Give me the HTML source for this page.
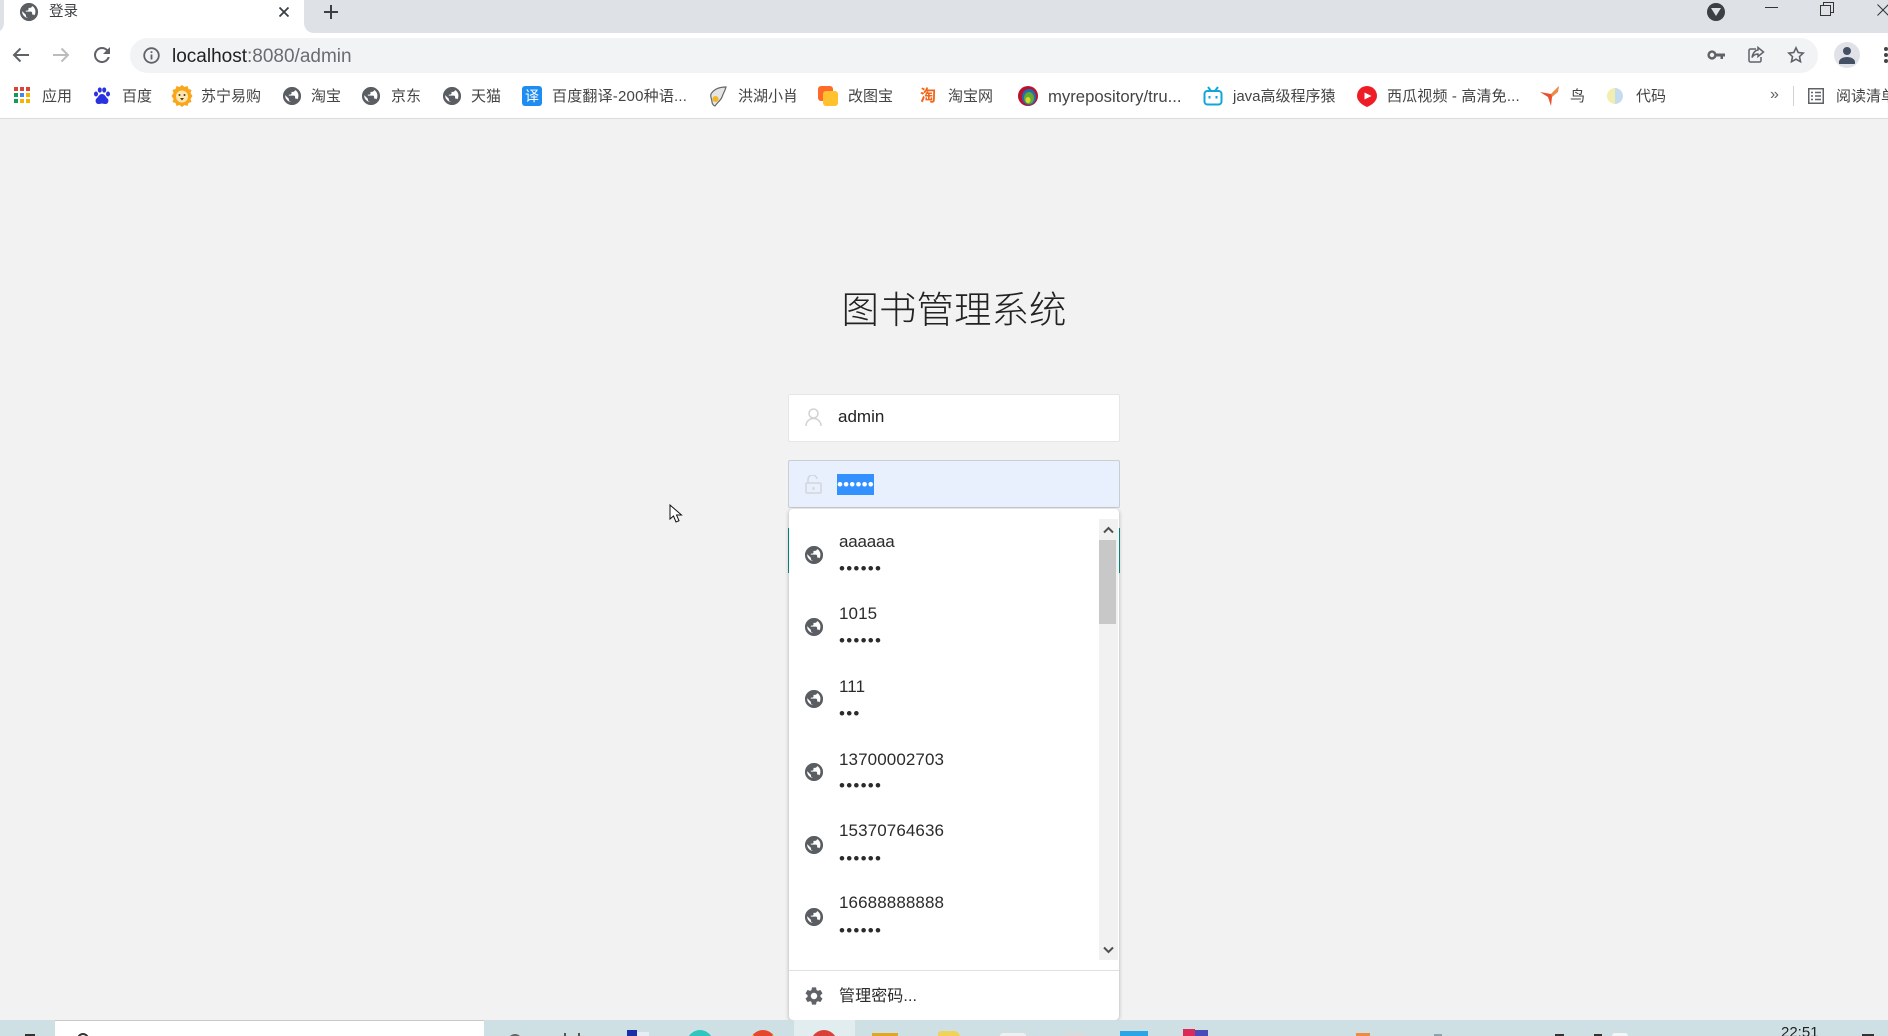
<!DOCTYPE html>
<html lang="zh"><head><meta charset="utf-8"><title>登录</title>
<style>
html,body{margin:0;padding:0;width:1888px;height:1036px;overflow:hidden;background:#f2f2f2;font-family:"Liberation Sans","Noto Sans CJK SC",sans-serif}
#w{position:absolute;left:0;top:0;width:1888px;height:1036px;overflow:hidden;filter:blur(.3px)}
.a{position:absolute}
.t{position:absolute;white-space:nowrap;font-size:15px;line-height:20px;color:#444}
svg{position:absolute;display:block}
.n{position:absolute;left:839px;font-size:17px;line-height:20px;color:#2b2b2b;white-space:nowrap;letter-spacing:.1px}
.d{position:absolute;left:839px;font-size:17px;line-height:20px;color:#2b2b2b;letter-spacing:1.25px;white-space:nowrap}
</style></head>
<body>
<svg width="0" height="0" style="position:absolute"><defs>
<symbol id="g" viewBox="2 2 20 20"><path fill="#5a5e63" stroke="#5a5e63" stroke-width=".9" d="M12 2.400C6.700 2.400 2.400 6.700 2.400 12s4.300 9.600 9.600 9.600 9.600-4.300 9.600-9.600S17.300 2.400 12 2.400zm-1 16.800c-3.950-.49-7-3.850-7-7.200 0-.62.08-1.210.21-1.790L9 15v1c0 1.100.9 2 2 2v1.200zm6.900-2.540c-.26-.81-1-1.390-1.900-1.390h-1v-2.300c0-.55-.45-1-1-1H8v-2h2c.55 0 1-.45 1-1V7h2c1.100 0 2-.9 2-2v-.41c2.930 1.190 4.600 4.060 4.600 7.410 0 1.700-.4 3.240-1.700 4.660z"/></symbol>
</defs></svg>
<div id="w">

<!-- tab strip -->
<div class="a" style="left:0;top:0;width:1888px;height:33px;background:#dee1e6"></div>
<div class="a" style="left:4px;top:0;width:300px;height:33px;background:#fff"></div>
<div class="a" style="left:0;top:22px;width:4px;height:11px;background:#fff"></div>
<div class="a" style="left:-8px;top:13px;width:12px;height:20px;background:#dee1e6;border-radius:0 0 10px 0"></div>
<div class="a" style="left:304px;top:23px;width:10px;height:10px;background:#fff"></div>
<div class="a" style="left:304px;top:0;width:14px;height:33px;background:#dee1e6;border-radius:0 0 0 10px"></div>
<svg style="left:20px;top:3px" width="18" height="18"><use href="#g"/></svg>
<div class="t" style="left:49px;top:2px;font-size:14.500px;color:#3c4043">登录</div>
<svg style="left:278px;top:6px" width="12" height="12" viewBox="0 0 12 12"><path d="M1.500 1.500l9 9M10.500 1.500l-9 9" stroke="#3c4043" stroke-width="1.800"/></svg>
<svg style="left:323px;top:4px" width="16" height="16" viewBox="0 0 16 16"><path d="M8 1v14M1 8h14" stroke="#3c4043" stroke-width="2"/></svg>
<div class="a" style="left:1707px;top:3px;width:18px;height:18px;border-radius:50%;background:#3c4043"></div>
<svg style="left:1710px;top:8px" width="12" height="9" viewBox="0 0 12 9"><path d="M1 0h10L6 8z" fill="#dee1e6"/></svg>
<div class="a" style="left:1765px;top:7px;width:13px;height:1px;background:#333"></div>
<svg style="left:1820px;top:2px" width="14" height="14" viewBox="0 0 14 14" fill="none" stroke="#333" stroke-width="1"><rect x=".5" y="3.500" width="10" height="10"/><path d="M3.500 3.500V.5h10v10h-3"/></svg>
<svg style="left:1877px;top:4px" width="12" height="12" viewBox="0 0 12 12"><path d="M.5.5l11 11M11.500 .5l-11 11" stroke="#333" stroke-width="1"/></svg>

<!-- toolbar -->
<div class="a" style="left:0;top:33px;width:1888px;height:85px;background:#fff;border-bottom:1px solid #dadce0"></div>
<svg style="left:12px;top:47px" width="18" height="16" viewBox="0 0 18 16" fill="none" stroke="#5f6368" stroke-width="2"><path d="M17 8H2M8.500 1.500L2 8l6.500 6.500"/></svg>
<svg style="left:52px;top:47px" width="18" height="16" viewBox="0 0 18 16" fill="none" stroke="#babcbe" stroke-width="2"><path d="M1 8h15M9.500 1.500L16 8l-6.500 6.500"/></svg>
<svg style="left:94px;top:47px" width="16" height="16" viewBox="4 4 16 16"><path fill="#5f6368" d="M17.650 6.350A7.960 7.960 0 0 0 12 4a8 8 0 1 0 7.730 10h-2.080A6 6 0 1 1 12 6c1.660 0 3.140.69 4.220 1.780L13 11h7V4l-2.350 2.350z"/></svg>
<div class="a" style="left:130px;top:38px;width:1688px;height:35px;border-radius:18px;background:#f1f3f4"></div>
<svg style="left:143px;top:47px" width="17" height="17" viewBox="0 0 17 17" fill="none"><circle cx="8.500" cy="8.500" r="7.300" stroke="#5f6368" stroke-width="1.800"/><path d="M8.500 7.500v5M8.500 4.200v1.800" stroke="#5f6368" stroke-width="1.800"/></svg>
<div class="t" style="left:172px;top:45px;font-size:19px;line-height:24px;color:#202124">localhost<span style="color:#6a6d70">:8080/admin</span></div>
<svg style="left:1707px;top:49px" width="18" height="12" viewBox="0 0 18 12"><circle cx="5" cy="6" r="3.400" fill="none" stroke="#5f6368" stroke-width="2.400"/><path d="M8 4.500h10v3h-2v2.500h-2.500V7.500H8z" fill="#5f6368"/></svg>
<svg style="left:1747px;top:46px" width="18" height="18" viewBox="0 0 18 18" fill="none" stroke="#5f6368" stroke-width="1.500"><path d="M9 3H3.500A1.500 1.500 0 0 0 2 4.500v10A1.500 1.500 0 0 0 3.500 16h9a1.500 1.500 0 0 0 1.500-1.500V11"/><path d="M11 1.500L16.500 6 11 10.500V8c-3 0-4.500 1-6 3.500C5.500 8 7.500 4.500 11 4z"/></svg>
<svg style="left:1787px;top:46px" width="18" height="18" viewBox="0 0 18 18" fill="none" stroke="#5f6368" stroke-width="1.600"><path d="M9 1.800l2.200 4.700 5 .6-3.700 3.500 1 5.100L9 13.200l-4.500 2.500 1-5.100L1.800 7.100l5-.6z"/></svg>
<div class="a" style="left:1834px;top:42px;width:26px;height:26px;border-radius:50%;background:#e0e2e8"></div>
<svg style="left:1838px;top:46px" width="18" height="18" viewBox="0 0 18 18" fill="#445064"><circle cx="9" cy="5" r="4"/><path d="M1 18v-2c0-3 4-5 8-5s8 2 8 5v2z"/></svg>
<div class="a" style="left:1884px;top:47px;width:4px;height:4px;background:#444;border-radius:50%;box-shadow:0 6px 0 #444,0 12px 0 #444"></div>

<!-- bookmarks -->
<svg style="left:14px;top:87px" width="17" height="17" viewBox="0 0 17 17">
<rect x="0" y="0" width="4" height="4" fill="#db4437"/><rect x="6" y="0" width="4" height="4" fill="#db4437"/><rect x="12" y="0" width="4" height="4" fill="#db4437"/>
<rect x="0" y="6" width="4" height="4" fill="#0f9d58"/><rect x="6" y="6" width="4" height="4" fill="#4285f4"/><rect x="12" y="6" width="4" height="4" fill="#f4b400"/>
<rect x="0" y="12" width="4" height="4" fill="#0f9d58"/><rect x="6" y="12" width="4" height="4" fill="#f4b400"/><rect x="12" y="12" width="4" height="4" fill="#f4b400"/></svg>
<div class="t" style="left:42px;top:87px">应用</div>
<svg style="left:93px;top:87px" width="18" height="18" viewBox="0 0 18 18" fill="#2932e1"><ellipse cx="3" cy="7" rx="2" ry="2.500"/><ellipse cx="6.800" cy="3" rx="2" ry="2.600"/><ellipse cx="11.200" cy="3" rx="2" ry="2.600"/><ellipse cx="15" cy="7" rx="2" ry="2.500"/><path d="M9 7c-3 0-3.500 3-5.500 4.500C1.500 13.500 3 17.500 6 17c1.500 0 2-.5 3-.5s1.500.5 3 .5c3 .5 4.500-3.500 2.500-5.500C12.500 10 12 7 9 7z"/></svg>
<div class="t" style="left:122px;top:87px">百度</div>
<svg style="left:171px;top:85px" width="22" height="22" viewBox="0 0 22 22"><path d="M11 0l2.500 2 3-1 1 3 3 1-1 3 2 3-2 3 1 3-3 1-1 3-3-1-2.500 2-2.500-2-3 1-1-3-3-1 1-3-2-3 2-3-1-3 3-1 1-3 3 1z" fill="#f9a61a"/><circle cx="11" cy="11.500" r="6" fill="#fde6b0"/><circle cx="8.500" cy="10" r="1" fill="#5a3a10"/><circle cx="13.500" cy="10" r="1" fill="#5a3a10"/><path d="M9 13h4l-2 2.500z" fill="#5a3a10"/></svg>
<div class="t" style="left:201px;top:87px">苏宁易购</div>
<svg style="left:283px;top:87px" width="18" height="18"><use href="#g"/></svg>
<div class="t" style="left:311px;top:87px">淘宝</div>
<svg style="left:362px;top:87px" width="18" height="18"><use href="#g"/></svg>
<div class="t" style="left:391px;top:87px">京东</div>
<svg style="left:443px;top:87px" width="18" height="18"><use href="#g"/></svg>
<div class="t" style="left:471px;top:87px">天猫</div>
<div class="a" style="left:522px;top:86px;width:20px;height:20px;border-radius:3px;background:#1e8cf0;color:#fff;font-size:14px;line-height:20px;text-align:center">译</div>
<div class="t" style="left:552px;top:87px;letter-spacing:.2px">百度翻译-200种语...</div>
<svg style="left:708px;top:86px" width="20" height="21" viewBox="0 0 20 21"><path d="M18 1C12 1 6 3 3 8c-1 3 1 5 1 8 0 2 2 4 3 4 2-3 6-6 7-9 1-3 3-6 4-10z" fill="#e4e4e4" stroke="#666" stroke-width="1.200"/><circle cx="7.500" cy="13" r="3" fill="#f1b722"/></svg>
<div class="t" style="left:738px;top:87px">洪湖小肖</div>
<div class="a" style="left:818px;top:86px;width:15px;height:15px;border-radius:3px;background:#ff6a2b"></div>
<div class="a" style="left:823px;top:91px;width:15px;height:15px;border-radius:3px;background:#ffc12e"></div>
<div class="t" style="left:848px;top:87px">改图宝</div>
<div class="t" style="left:920px;top:87px;font-weight:700;font-size:16px;color:#f2661c">淘</div>
<div class="t" style="left:948px;top:87px">淘宝网</div>
<svg style="left:1018px;top:86px" width="20" height="20" viewBox="0 0 20 20"><circle cx="10" cy="10" r="10" fill="#b8122e"/><ellipse cx="11" cy="11" rx="7" ry="8" fill="#1e6fb0"/><ellipse cx="11" cy="12" rx="5" ry="6" fill="#6aa832"/><ellipse cx="10" cy="14" rx="2.500" ry="3" fill="#d8d82a"/></svg>
<div class="t" style="left:1048px;top:87px;font-size:16.700px">myrepository/tru...</div>
<svg style="left:1203px;top:86px" width="20" height="20" viewBox="0 0 20 20" fill="none" stroke="#12a5d9" stroke-width="2"><rect x="1.500" y="5" width="17" height="13.500" rx="3"/><path d="M5 1l3 4M15 1l-3 4"/><path d="M6.500 10v2.500M13.500 10v2.500"/></svg>
<div class="t" style="left:1233px;top:87px">java高级程序猿</div>
<svg style="left:1357px;top:86px" width="20" height="21" viewBox="0 0 20 21"><path d="M10 0a10 10 0 0 1 10 10c0 5-5 9-10 11C5 19 0 15 0 10A10 10 0 0 1 10 0z" fill="#ee1c25"/><path d="M7.500 6.500l7 3.500-7 3.500z" fill="#fff"/></svg>
<div class="t" style="left:1387px;top:87px;letter-spacing:.15px">西瓜视频 - 高清免...</div>
<svg style="left:1540px;top:86px" width="20" height="20" viewBox="0 0 20 20"><path d="M19 0L11 8 0 6l8 5 3 9 1-9z" fill="#e8502a"/><path d="M19 0l-1 6-6 5-1-3z" fill="#f08a4b"/></svg>
<div class="t" style="left:1570px;top:87px">鸟</div>
<div class="a" style="left:1607px;top:88px;width:8px;height:16px;border-radius:8px 0 0 8px;background:#f1eeb0"></div>
<div class="a" style="left:1615px;top:88px;width:8px;height:16px;border-radius:0 8px 8px 0;background:#c5dcf0"></div>
<div class="t" style="left:1636px;top:87px">代码</div>
<div class="t" style="left:1770px;top:85px;font-size:16px;color:#5f6368">»</div>
<div class="a" style="left:1793px;top:86px;width:1px;height:20px;background:#d0d2d5"></div>
<svg style="left:1808px;top:88px" width="16" height="16" viewBox="0 0 16 16" fill="none" stroke="#5f6368" stroke-width="1.500"><rect x=".75" y=".75" width="14.500" height="14.500"/><path d="M3 4.500h2M3 8h2M3 11.500h2M7 4.500h6M7 8h6M7 11.500h6"/></svg>
<div class="t" style="left:1836px;top:87px">阅读清单</div>

<!-- page -->
<div class="a" style="left:789px;top:282px;width:330px;text-align:center;font-size:37.500px;line-height:50px;color:#222;font-weight:300;font-family:'Noto Sans CJK SC','WenQuanYi Zen Hei',sans-serif">图书管理系统</div>

<div class="a" style="left:788px;top:394px;width:330px;height:46px;background:#fff;border:1px solid #e6e6e6;border-radius:2px"></div>
<svg style="left:805px;top:408px" width="17" height="19" viewBox="0 0 17 19" fill="none" stroke="#d2d2d2" stroke-width="1.500"><circle cx="8.500" cy="5.500" r="4.500"/><path d="M1 18c0-4 3-7.500 7.500-7.500S16 14 16 18"/></svg>
<div class="a" style="left:838px;top:405px;font-size:17px;line-height:24px;color:#222">admin</div>

<div class="a" style="left:788px;top:460px;width:330px;height:46px;background:#e8f0fe;border:1px solid #c9cdd4;border-radius:2px"></div>
<svg style="left:805px;top:475px" width="17" height="19" viewBox="0 0 17 19" fill="none" stroke="#d2d6dc" stroke-width="1.500"><path d="M3 8V5a4.500 4.500 0 0 1 9-1"/><rect x="1" y="8" width="15" height="10" rx="1"/><path d="M8.500 12v3" stroke-width="2"/></svg>
<div class="a" style="left:837px;top:474px;width:37px;height:21px;background:#3390ff;color:#fff;font-size:17px;letter-spacing:.2px;line-height:21px;white-space:nowrap;overflow:hidden">••••••</div>

<!-- teal button behind popup -->
<div class="a" style="left:788px;top:528px;width:332px;height:45px;background:#009688"></div>

<!-- popup -->
<div class="a" style="left:789px;top:509px;width:330px;height:511px;background:#fff;border-radius:4px;box-shadow:0 1px 4px rgba(0,0,0,.28)"></div>
<div class="a" style="left:1099px;top:519px;width:19px;height:441px;background:#f1f1f1"></div>
<div class="a" style="left:1099px;top:540px;width:17px;height:84px;background:#c8c8c8"></div>
<svg style="left:1103px;top:526px" width="11" height="8" viewBox="0 0 11 8"><path d="M1 6.500l4.500-4.500 4.500 4.500" fill="none" stroke="#505050" stroke-width="2"/></svg>
<svg style="left:1103px;top:946px" width="11" height="8" viewBox="0 0 11 8"><path d="M1 1.500l4.500 4.500 4.500-4.500" fill="none" stroke="#505050" stroke-width="2"/></svg>

<svg style="left:805px;top:546px" width="18" height="18"><use href="#g"/></svg>
<div class="n" style="top:532px;letter-spacing:-.2px">aaaaaa</div><div class="d" style="top:559px">••••••</div>
<svg style="left:805px;top:618px" width="18" height="18"><use href="#g"/></svg>
<div class="n" style="top:604px">1015</div><div class="d" style="top:631px">••••••</div>
<svg style="left:805px;top:690px" width="18" height="18"><use href="#g"/></svg>
<div class="n" style="top:677px">111</div><div class="d" style="top:704px">•••</div>
<svg style="left:805px;top:763px" width="18" height="18"><use href="#g"/></svg>
<div class="n" style="top:750px">13700002703</div><div class="d" style="top:776px">••••••</div>
<svg style="left:805px;top:836px" width="18" height="18"><use href="#g"/></svg>
<div class="n" style="top:821px">15370764636</div><div class="d" style="top:849px">••••••</div>
<svg style="left:805px;top:908px" width="18" height="18"><use href="#g"/></svg>
<div class="n" style="top:893px">16688888888</div><div class="d" style="top:921px">••••••</div>

<div class="a" style="left:789px;top:970px;width:330px;height:1px;background:#e0e0e0"></div>
<svg style="left:805px;top:987px" width="18" height="18" viewBox="2 2 20 20"><path fill="#5f6368" d="M19.140 12.940c.04-.3.060-.61.060-.94 0-.32-.02-.64-.07-.94l2.030-1.580a.49.49 0 0 0 .12-.61l-1.920-3.320a.49.49 0 0 0-.59-.22l-2.390.96c-.5-.38-1.030-.7-1.620-.94l-.36-2.540a.484.484 0 0 0-.48-.41h-3.840c-.24 0-.43.17-.47.41l-.36 2.540c-.59.24-1.130.57-1.620.94l-2.390-.96c-.22-.08-.47 0-.59.22L2.740 8.870c-.12.21-.08.47.12.61l2.030 1.580c-.05.3-.09.63-.09.94s.02.64.07.94l-2.030 1.580a.49.49 0 0 0-.12.61l1.920 3.320c.12.22.37.29.59.22l2.390-.96c.5.38 1.030.7 1.620.94l.36 2.540c.05.24.24.41.48.41h3.840c.24 0 .44-.17.47-.41l.36-2.540c.59-.24 1.130-.56 1.620-.94l2.390.96c.22.08.47 0 .59-.22l1.920-3.320c.12-.22.070-.47-.12-.61l-2.010-1.580zM12 15.600A3.610 3.610 0 0 1 8.400 12 3.610 3.610 0 0 1 12 8.400a3.610 3.610 0 0 1 3.600 3.600 3.610 3.610 0 0 1-3.600 3.600z"/></svg>
<div class="n" style="top:987px;font-size:16px;left:839px">管理密码...</div>

<!-- taskbar -->
<div class="a" style="left:0;top:1020px;width:1888px;height:16px;background:#cfe0e5;overflow:hidden">
  <div class="a" style="left:55px;top:0;width:429px;height:16px;background:#fff;border-top:1px solid #c9c9c9"></div>
  <div class="a" style="left:25px;top:14px;width:10px;height:2px;background:#333"></div>
  <div class="a" style="left:77px;top:13px;width:8px;height:8px;border:2px solid #333;border-radius:50%"></div>
  <div class="a" style="left:508px;top:14px;width:10px;height:10px;border:2px solid #666;border-radius:50%"></div>
  <div class="a" style="left:564px;top:13px;width:2px;height:3px;background:#555"></div>
  <div class="a" style="left:578px;top:13px;width:2px;height:3px;background:#555"></div>
  <div class="a" style="left:627px;top:10px;width:10px;height:6px;background:#1a2fa8"></div>
  <div class="a" style="left:637px;top:12px;width:12px;height:4px;background:#e8edf5"></div>
  <div class="a" style="left:687px;top:10px;width:26px;height:26px;border-radius:50%;background:#2fc6c0"></div>
  <div class="a" style="left:750px;top:10px;width:26px;height:26px;border-radius:50%;background:radial-gradient(circle,#fff 0 5px,transparent 5.500px),conic-gradient(#e5482d 0 14%,#f4c20d 14% 86%,#e5482d 86%)"></div>
  <div class="a" style="left:794px;top:0;width:61px;height:16px;background:#e2edf0"></div>
  <div class="a" style="left:811px;top:10px;width:26px;height:26px;border-radius:50%;background:#d8403a"></div>
  <div class="a" style="left:872px;top:13px;width:26px;height:6px;background:#e0a820"></div>
  <div class="a" style="left:938px;top:11px;width:22px;height:6px;border-radius:4px 8px 0 0;background:#f1d25a"></div>
  <div class="a" style="left:1000px;top:13px;width:26px;height:6px;border-radius:3px;background:#eef1f2"></div>
  <div class="a" style="left:1064px;top:12px;width:20px;height:6px;background:#d8dcdc"></div>
  <div class="a" style="left:1120px;top:11px;width:28px;height:8px;background:#2aa5e5"></div>
  <div class="a" style="left:1183px;top:9px;width:12px;height:7px;background:#d92a5a"></div>
  <div class="a" style="left:1195px;top:10px;width:13px;height:6px;background:#4a4ab8"></div>
  <div class="a" style="left:1356px;top:13px;width:14px;height:3px;background:#f08a3c"></div>
  <div class="a" style="left:1434px;top:14px;width:8px;height:2px;background:#8fa3ab"></div>
  <div class="a" style="left:1555px;top:14px;width:9px;height:2px;background:#333"></div>
  <div class="a" style="left:1594px;top:14px;width:8px;height:2px;background:#333"></div>
  <div class="a" style="left:1612px;top:13px;width:16px;height:3px;background:#f4f7f8;border-radius:3px 3px 0 0"></div>
  <div class="t" style="left:1781px;top:5px;font-size:15px;line-height:16px;color:#222">22:51</div>
  <div class="a" style="left:1862px;top:14px;width:12px;height:2px;background:#333"></div>
</div>

<!-- cursor -->
<svg style="left:669px;top:504px" width="14" height="20" viewBox="0 0 14 20"><path d="M1 1v14l3.500-3 2.500 6 3-1.300-2.500-5.700H12.500z" fill="#fff" stroke="#111" stroke-width="1"/></svg>
</div>
</body></html>
